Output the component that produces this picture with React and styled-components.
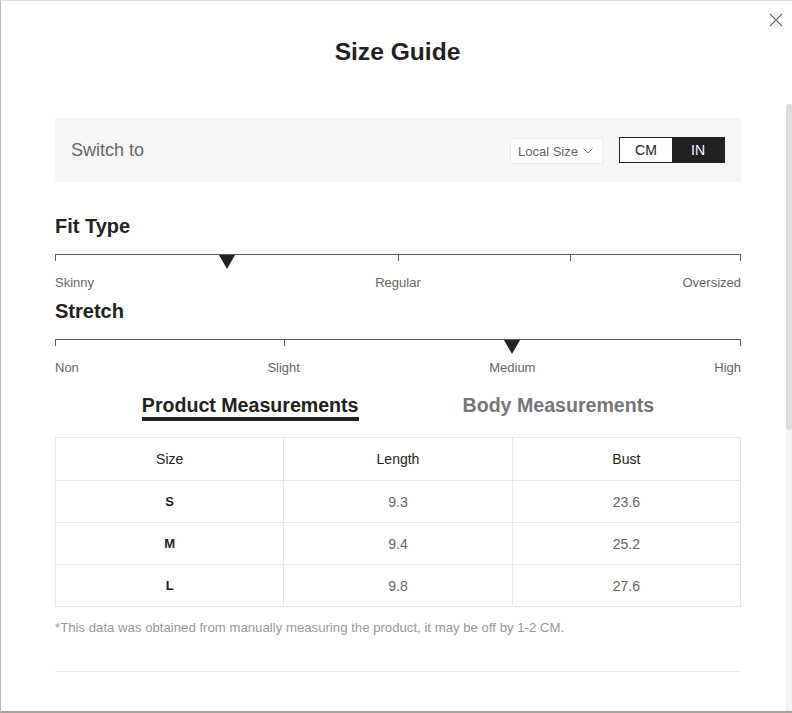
import React from "react";
import styled, { createGlobalStyle } from "styled-components";

const Global = createGlobalStyle`
  html, body { margin: 0; padding: 0; background: #fff; }
  body { font-family: "Liberation Sans", Arial, sans-serif; color: #222; }
  * { box-sizing: border-box; }
`;

const Modal = styled.div`
  width: 792px;
  height: 713px;
  background: #fff;
  border-top: 1px solid #dedede;
  border-left: 1px solid #b9b9b9;
  border-bottom: 2px solid #a9a49b;
  display: flex;
  flex-direction: column;
  overflow: hidden;
`;

const Header = styled.header`
  position: relative;
  flex: 0 0 103px;
  display: flex;
  justify-content: center;
  padding-top: 37px;
`;

const Title = styled.h1`
  margin: 0;
  font-size: 24.6px;
  line-height: 28px;
  font-weight: 700;
  color: #222;
  padding-left: 2px;
`;

const Close = styled.button`
  position: absolute;
  top: 11px;
  right: 8px;
  width: 16px;
  height: 16px;
  padding: 0;
  border: 0;
  background: none;
  display: flex;
  align-items: center;
  justify-content: center;
  cursor: pointer;
`;

const Body = styled.div`
  flex: 1 1 auto;
  min-height: 0;
  display: flex;
`;

const Scroller = styled.div`
  flex: 1 1 auto;
  overflow: hidden;
`;

const Rail = styled.div`
  flex: 0 0 6px;
  background: #f4f4f4;
  display: flex;
  flex-direction: column;
`;

const Thumb = styled.div`
  height: 326px;
  background: #dddddd;
  border-radius: 3px;
`;

const Content = styled.div`
  padding: 14px 45px 0 54px;
  display: flex;
  flex-direction: column;
`;

const SwitchBar = styled.div`
  height: 64px;
  background: #f6f6f6;
  display: flex;
  align-items: center;
  padding: 0 16px;
  gap: 16px;
`;

const SwitchLabel = styled.span`
  flex: 1;
  font-size: 18px;
  color: #666;
`;

const Dropdown = styled.button`
  height: 26px;
  width: 93px;
  margin-top: 2px;
  background: #fff;
  border: 1px solid #ececec;
  display: flex;
  align-items: center;
  gap: 5px;
  padding: 0 0 0 7px;
  font-family: inherit;
  font-size: 13px;
  color: #666;
`;

const UnitToggle = styled.div`
  display: flex;
  height: 26px;
  border: 1px solid #222;
`;

const Unit = styled.button`
  width: 52px;
  border: 0;
  padding: 0;
  font-family: inherit;
  font-size: 14px;
  background: ${(p) => (p.$active ? "#222" : "#fff")};
  color: ${(p) => (p.$active ? "#fff" : "#222")};
`;

const SectionTitle = styled.h2`
  margin: ${(p) => p.$top}px 0 0;
  font-size: 20px;
  line-height: 24px;
  font-weight: 700;
  color: #222;
`;

const Track = styled.div`
  position: relative;
  height: 21px;
  margin-top: 16px;
  border-top: 1px solid #5c5c5c;
`;

const Tick = styled.span`
  position: absolute;
  top: 0;
  width: 1px;
  height: 6px;
  background: #5c5c5c;
`;

const Marker = styled.svg`
  position: absolute;
  top: 0;
  width: 16px;
  height: 14px;
  margin-left: -8px;
`;

const Labels = styled.div`
  position: relative;
  height: 16px;
`;

const Label = styled.span`
  position: absolute;
  top: 0;
  font-size: 13px;
  line-height: 16px;
  color: #666;
  white-space: nowrap;
`;

const Tabs = styled.div`
  display: flex;
  justify-content: center;
  gap: 104px;
  margin-top: 18px;
`;

const Tab = styled.button`
  padding: 0;
  background: none;
  border: 0;
  border-bottom: 4px solid ${(p) => (p.$active ? "#222" : "transparent")};
  font-family: inherit;
  font-size: 19.6px;
  line-height: 23px;
  font-weight: 700;
  color: ${(p) => (p.$active ? "#222" : "#767676")};
`;

const Table = styled.table`
  margin-top: 16px;
  width: 100%;
  border-collapse: collapse;
  table-layout: fixed;
  font-size: 14px;
`;

const Th = styled.th`
  height: 43px;
  padding: 0;
  border: 1px solid #e6e6e6;
  font-weight: 400;
  color: #222;
`;

const Td = styled.td`
  height: 42px;
  padding: 0;
  border: 1px solid #e6e6e6;
  text-align: center;
  color: ${(p) => (p.$strong ? "#222" : "#666")};
  font-weight: ${(p) => (p.$strong ? 700 : 400)};
  font-size: ${(p) => (p.$strong ? "13px" : "14px")};
`;

const Note = styled.p`
  margin: 13px 0 0;
  font-size: 13.2px;
  line-height: 16px;
  color: #999;
`;

const Divider = styled.hr`
  margin: 35px 0 0;
  border: 0;
  border-top: 1px solid #ececec;
`;

function Scale({ points, marker }) {
  return (
    <>
      <Track>
        {points.map((pt, i) =>
          pt.pos === marker ? null : (
            <Tick
              key={i}
              style={pt.pos === 100 ? { right: 0 } : { left: `${pt.pos}%` }}
            />
          )
        )}
        <Marker viewBox="0 0 16 14" style={{ left: `${marker}%` }}>
          <path d="M0 0 H16 L8 14 Z" fill="#222" />
        </Marker>
      </Track>
      <Labels>
        {points
          .filter((pt) => pt.label)
          .map((pt, i) => (
            <Label
              key={i}
              style={
                pt.pos === 0
                  ? { left: 0 }
                  : pt.pos === 100
                  ? { right: 0 }
                  : { left: `${pt.pos}%`, transform: "translateX(-50%)" }
              }
            >
              {pt.label}
            </Label>
          ))}
      </Labels>
    </>
  );
}

const fit = [
  { pos: 0, label: "Skinny" },
  { pos: 25 },
  { pos: 50, label: "Regular" },
  { pos: 75 },
  { pos: 100, label: "Oversized" },
];

const stretch = [
  { pos: 0, label: "Non" },
  { pos: 100 / 3, label: "Slight" },
  { pos: 200 / 3, label: "Medium" },
  { pos: 100, label: "High" },
];

const rows = [
  ["S", "9.3", "23.6"],
  ["M", "9.4", "25.2"],
  ["L", "9.8", "27.6"],
];

export default function App() {
  return (
    <>
      <Global />
      <Modal>
        <Header>
          <Title>Size Guide</Title>
          <Close aria-label="Close">
            <svg width="14" height="14" viewBox="0 0 14 14">
              <path d="M1 1 L13 13 M13 1 L1 13" stroke="#666" strokeWidth="1.1" fill="none" />
            </svg>
          </Close>
        </Header>
        <Body>
          <Scroller>
            <Content>
              <SwitchBar>
                <SwitchLabel>Switch to</SwitchLabel>
                <Dropdown>
                  Local Size
                  <svg width="10" height="6" viewBox="0 0 10 6">
                    <path d="M0.5 0.5 L5 5 L9.5 0.5" stroke="#777" strokeWidth="1" fill="none" />
                  </svg>
                </Dropdown>
                <UnitToggle>
                  <Unit>CM</Unit>
                  <Unit $active>IN</Unit>
                </UnitToggle>
              </SwitchBar>

              <SectionTitle $top={32}>Fit Type</SectionTitle>
              <Scale points={fit} marker={25} />

              <SectionTitle $top={8}>Stretch</SectionTitle>
              <Scale points={stretch} marker={200 / 3} />

              <Tabs>
                <Tab $active>Product Measurements</Tab>
                <Tab>Body Measurements</Tab>
              </Tabs>

              <Table>
                <thead>
                  <tr>
                    <Th>Size</Th>
                    <Th>Length</Th>
                    <Th>Bust</Th>
                  </tr>
                </thead>
                <tbody>
                  {rows.map((r) => (
                    <tr key={r[0]}>
                      <Td $strong>{r[0]}</Td>
                      <Td>{r[1]}</Td>
                      <Td>{r[2]}</Td>
                    </tr>
                  ))}
                </tbody>
              </Table>

              <Note>*This data was obtained from manually measuring the product, it may be off by 1-2 CM.</Note>
              <Divider />
            </Content>
          </Scroller>
          <Rail>
            <Thumb />
          </Rail>
        </Body>
      </Modal>
    </>
  );
}
